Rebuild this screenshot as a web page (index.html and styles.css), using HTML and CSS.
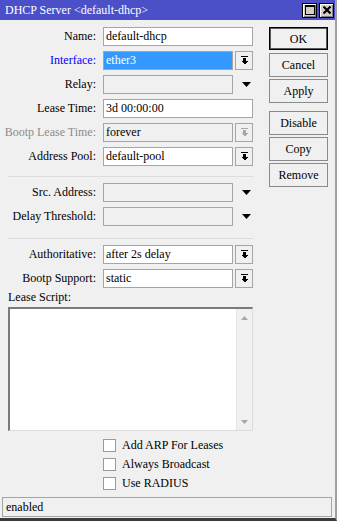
FILE: index.html
```html
<!doctype html>
<html>
<head>
	<meta charset="UTF-8">
	<title>DHCP Server</title>
	<link rel="stylesheet" href="styles.css">
</head>
<body>
<div class="window">
	<div class="titlebar">
		<span class="title">DHCP Server &lt;default-dhcp&gt;</span>
		<div class="tbtns">
			<span class="tbtn"><svg width="10" height="10" viewBox="0 0 10 10" shape-rendering="crispEdges"><rect x="0" y="0" width="10" height="10" fill="none" stroke="#000" stroke-width="2"/><rect x="0" y="0" width="10" height="2" fill="#000"/></svg></span>
			<span class="tbtn"><svg width="10" height="10" viewBox="0 0 10 10"><path d="M1.5 1.5L8.5 8.5M8.5 1.5L1.5 8.5" stroke="#000" stroke-width="2.2" fill="none"/></svg></span>
		</div>
	</div>
	<div class="main">
		<div class="form">
			<div class="row">
				<label>Name:</label>
				<div class="field"><div class="box">default-dhcp</div></div>
			</div>
			<div class="row">
				<label class="blue">Interface:</label>
				<div class="field"><div class="box sel">ether3</div><span class="drop"><svg width="7" height="9" viewBox="0 0 7 9" shape-rendering="crispEdges"><rect x="0" y="0" width="7" height="1"/><rect x="2" y="2" width="3" height="3"/><polygon points="0,5 7,5 3.5,8.5"/></svg></span></div>
			</div>
			<div class="row">
				<label>Relay:</label>
				<div class="field"><div class="box empty"></div><span class="arrow"><svg width="9" height="5" viewBox="0 0 9 5"><polygon points="0,0 9,0 4.5,5"/></svg></span></div>
			</div>
			<div class="row">
				<label>Lease Time:</label>
				<div class="field"><div class="box">3d 00:00:00</div></div>
			</div>
			<div class="row">
				<label class="gray">Bootp Lease Time:</label>
				<div class="field"><div class="box empty">forever</div><span class="drop off"><svg width="7" height="9" viewBox="0 0 7 9" shape-rendering="crispEdges"><rect x="0" y="0" width="7" height="1"/><rect x="2" y="2" width="3" height="3"/><polygon points="0,5 7,5 3.5,8.5"/></svg></span></div>
			</div>
			<div class="row">
				<label>Address Pool:</label>
				<div class="field"><div class="box">default-pool</div><span class="drop"><svg width="7" height="9" viewBox="0 0 7 9" shape-rendering="crispEdges"><rect x="0" y="0" width="7" height="1"/><rect x="2" y="2" width="3" height="3"/><polygon points="0,5 7,5 3.5,8.5"/></svg></span></div>
			</div>
			<div class="sep"></div>
			<div class="row">
				<label>Src. Address:</label>
				<div class="field"><div class="box empty"></div><span class="arrow"><svg width="9" height="5" viewBox="0 0 9 5"><polygon points="0,0 9,0 4.5,5"/></svg></span></div>
			</div>
			<div class="row">
				<label>Delay Threshold:</label>
				<div class="field"><div class="box empty"></div><span class="arrow"><svg width="9" height="5" viewBox="0 0 9 5"><polygon points="0,0 9,0 4.5,5"/></svg></span></div>
			</div>
			<div class="sep second"></div>
			<div class="row">
				<label>Authoritative:</label>
				<div class="field"><div class="box">after 2s delay</div><span class="drop"><svg width="7" height="9" viewBox="0 0 7 9" shape-rendering="crispEdges"><rect x="0" y="0" width="7" height="1"/><rect x="2" y="2" width="3" height="3"/><polygon points="0,5 7,5 3.5,8.5"/></svg></span></div>
			</div>
			<div class="row">
				<label>Bootp Support:</label>
				<div class="field"><div class="box">static</div><span class="drop"><svg width="7" height="9" viewBox="0 0 7 9" shape-rendering="crispEdges"><rect x="0" y="0" width="7" height="1"/><rect x="2" y="2" width="3" height="3"/><polygon points="0,5 7,5 3.5,8.5"/></svg></span></div>
			</div>
			<div class="script-label">Lease Script:</div>
			<div class="script">
				<div class="script-text"></div>
				<div class="scrollbar">
					<svg width="7" height="4" viewBox="0 0 7 4"><polygon points="0,4 7,4 3.5,0" fill="#a8a8a8"/></svg>
					<svg width="7" height="4" viewBox="0 0 7 4"><polygon points="0,0 7,0 3.5,4" fill="#a8a8a8"/></svg>
				</div>
			</div>
			<div class="checks">
				<div class="check"><span class="cbox"></span>Add ARP For Leases</div>
				<div class="check"><span class="cbox"></span>Always Broadcast</div>
				<div class="check"><span class="cbox"></span>Use RADIUS</div>
			</div>
		</div>
		<div class="buttons">
			<div class="btn default">OK</div>
			<div class="btn">Cancel</div>
			<div class="btn">Apply</div>
			<div class="btn spaced">Disable</div>
			<div class="btn">Copy</div>
			<div class="btn">Remove</div>
		</div>
	</div>
	<div class="status">enabled</div>
</div>
</body>
</html>
```
FILE: styles.css
```css
*{
	margin:0px;
	box-sizing:border-box;
}
body{
	background:#f0f0f0;
	font-family:"Liberation Serif", serif;
	font-size:12px;
	color:#000000;
}
.window{
	width:337px;
	height:521px;
	background:#f0f0f0;
	border-right:2px solid #a0a0a0;
	border-bottom:3px solid #3a3a3a;
	display:flex;
	flex-direction:column;
}
.titlebar{
	height:20px;
	background:#4b4fc8;
	display:flex;
	align-items:center;
	justify-content:space-between;
	padding:0px 1px 0px 5px;
	color:#ffffff;
	font-size:12px;
}
.tbtns{
	display:flex;
	gap:2px;
}
.tbtn{
	width:15px;
	height:15px;
	background:#d4d0c8;
	border:1px solid #000000;
	box-shadow:inset 1px 1px 0px #ffffff, inset -1px -1px 0px #808080;
	display:flex;
	align-items:center;
	justify-content:center;
}
.main{
	display:flex;
	padding-top:7px;
}
.form{
	width:253px;
	display:flex;
	flex-direction:column;
}
.row{
	display:grid;
	grid-template-columns:96px 1fr;
	column-gap:7px;
	height:19px;
	margin-bottom:5px;
}
.row label{
	text-align:right;
	line-height:19px;
	white-space:nowrap;
}
.row label.blue{
	color:#0000ff;
}
.row label.gray{
	color:#8c8c8c;
}
.field{
	display:flex;
	gap:2px;
}
.box{
	flex:1;
	height:19px;
	border:1px solid #a5a5a5;
	background:#ffffff;
	padding-left:2px;
	line-height:17px;
	white-space:nowrap;
	overflow:hidden;
}
.box.sel{
	background:#3399ff;
	color:#ffffff;
}
.box.empty{
	background:#f0f0f0;
}
.drop{
	width:18px;
	height:19px;
	border:1px solid #a5a5a5;
	background:#f0f0f0;
	display:flex;
	align-items:center;
	justify-content:center;
	fill:#000000;
}
.drop.off{
	fill:#a8a8a8;
}
.arrow{
	width:18px;
	display:flex;
	align-items:center;
	justify-content:center;
	padding-left:4px;
	fill:#000000;
}
.sep{
	height:1px;
	background:#dcdcdc;
	margin:5px 0px 6px 8px;
}
.sep.second{
	margin-top:7px;
}
.script-label{
	margin:-3px 0px 0px 8px;
	height:14px;
	line-height:14px;
}
.script{
	margin:3px 0px 0px 8px;
	height:124px;
	display:flex;
	border-top:2px solid #7a7a7a;
	border-left:2px solid #7a7a7a;
	border-right:1px solid #dcdcdc;
	border-bottom:1px solid #dcdcdc;
	background:#ffffff;
}
.script-text{
	flex:1;
}
.scrollbar{
	width:16px;
	background:#f0f0f0;
	border-left:1px solid #e6e6e6;
	display:flex;
	flex-direction:column;
	justify-content:space-between;
	align-items:center;
	padding:7px 0px 6px 0px;
}
.checks{
	margin:8px 0px 0px 103px;
	display:flex;
	flex-direction:column;
	gap:6px;
}
.check{
	display:flex;
	align-items:center;
	height:13px;
	white-space:nowrap;
}
.cbox{
	width:13px;
	height:13px;
	border:1px solid #9a9a9a;
	background:#ffffff;
	margin-right:6px;
}
.buttons{
	margin-left:16px;
	width:59px;
	display:flex;
	flex-direction:column;
	gap:2px;
}
.btn{
	height:24px;
	border:1px solid #8a8a8a;
	background:#f0f0f0;
	text-align:center;
	line-height:22px;
}
.btn.default{
	border:1px solid #000000;
	box-shadow:inset 0px 0px 0px 1px #5a5a5a;
	height:23px;
	margin-bottom:1px;
}
.btn.spaced{
	margin-top:6px;
}
.status{
	margin:7px 0px 0px 2px;
	width:330px;
	height:20px;
	border:1px solid #a5a5a5;
	padding-left:3px;
	line-height:18px;
}
```
